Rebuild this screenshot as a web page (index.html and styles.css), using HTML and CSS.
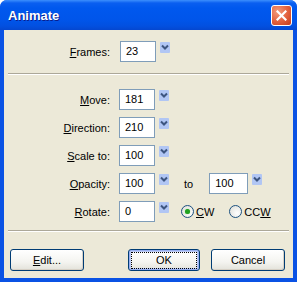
FILE: index.html
```html
<!DOCTYPE html>
<html lang="en">
  <head>
    <meta charset="UTF-8" />
    <title>Animate</title>
    <link rel="stylesheet" href="styles.css">
  </head>
  <body>
    <div class="window">
      <div class="titlebar">
        <span class="title">Animate</span>
        <span class="close">
          <svg width="11" height="11" viewBox="0 0 11 11">
            <path d="M1.5 1.5 L9.5 9.5 M9.5 1.5 L1.5 9.5" stroke="#fff" stroke-width="2.2" stroke-linecap="square" />
          </svg>
        </span>
      </div>

      <div class="content">
        <div class="row first">
          <label class="label"><u>F</u>rames:</label>
          <span class="field">23</span>
          <span class="drop"></span>
        </div>

        <div class="sep"></div>

        <div class="rows">
          <div class="row">
            <label class="label"><u>M</u>ove:</label>
            <span class="field">181</span>
            <span class="drop"></span>
          </div>
          <div class="row">
            <label class="label"><u>D</u>irection:</label>
            <span class="field">210</span>
            <span class="drop"></span>
          </div>
          <div class="row">
            <label class="label"><u>S</u>cale to:</label>
            <span class="field">100</span>
            <span class="drop"></span>
          </div>
          <div class="row">
            <label class="label"><u>O</u>pacity:</label>
            <span class="field">100</span>
            <span class="drop"></span>
            <span class="to">to</span>
            <span class="field wide">100</span>
            <span class="drop"></span>
          </div>
          <div class="row">
            <label class="label"><u>R</u>otate:</label>
            <span class="field">0</span>
            <span class="drop"></span>
            <span class="radio checked"></span>
            <span class="radio-text"><u>C</u>W</span>
            <span class="radio"></span>
            <span class="radio-text">CC<u>W</u></span>
          </div>
        </div>

        <div class="sep bottom"></div>

        <div class="buttons">
          <button class="btn"><u>E</u>dit...</button>
          <button class="btn default"><span class="focus">OK</span></button>
          <button class="btn">Cancel</button>
        </div>
      </div>
    </div>
  </body>
</html>
```

FILE: styles.css
```css
body {
  margin: 0;
  font-family: 'Liberation Sans', Arial, sans-serif;
  font-size: 11px;
  color: #000;
  background: #fff;
}

.window {
  width: 297px;
  height: 282px;
  box-sizing: border-box;
  display: flex;
  flex-direction: column;
  background: #0a52e4;
  border-radius: 7px 7px 0 0;
  overflow: hidden;
}

.titlebar {
  height: 30px;
  flex: none;
  display: flex;
  align-items: center;
  justify-content: space-between;
  padding: 0 5px 0 8px;
  background: linear-gradient(#3c8ffd 0, #0a5ff0 3px, #0058ee 8px, #0055ea 20px, #0250e0 26px, #0447d0 30px);
}

.title {
  color: #fff;
  font-weight: bold;
  font-size: 13px;
  text-shadow: 1px 1px 0 #0a1e8c;
  margin-top: 1px;
}

.close {
  width: 19px;
  height: 19px;
  border: 1px solid #fff;
  border-radius: 3px;
  display: flex;
  align-items: center;
  justify-content: center;
  background: radial-gradient(circle at 30% 30%, #f39c7c, #e2603c 55%, #c53b1b);
  margin-top: 1px;
}

.content {
  flex: 1;
  margin: 0 4px 4px;
  background: #ece9d8;
  padding-top: 11px;
}

.row {
  display: flex;
  align-items: center;
  height: 21px;
}

.rows {
  display: flex;
  flex-direction: column;
  gap: 7px;
  margin-top: 14px;
}

.label {
  width: 110px;
  text-align: right;
  padding-right: 4px;
  box-sizing: border-box;
  flex: none;
}

.field {
  width: 36px;
  height: 21px;
  box-sizing: border-box;
  border: 1px solid #7f9db9;
  background: #fff;
  padding-left: 5px;
  line-height: 19px;
}

.field.wide {
  width: 39px;
}

.row .field {
  margin-left: 5px;
}

.first .field {
  margin-left: 6px;
}

.drop {
  width: 10px;
  height: 11px;
  margin-left: 4px;
  align-self: flex-start;
  margin-top: 1px;
  background: #b1c6f4 url("data:image/svg+xml,%3Csvg xmlns='http://www.w3.org/2000/svg' width='10' height='11'%3E%3Cpath d='M2 3.5 L5 6.5 L8 3.5' fill='none' stroke='%233d5580' stroke-width='2'/%3E%3C/svg%3E") no-repeat;
  border-radius: 1px;
}

.to {
  margin-left: 15px;
  margin-right: 16px;
}

.row .field.wide {
  margin-left: 0;
}

.radio {
  width: 13px;
  height: 13px;
  box-sizing: border-box;
  border: 1px solid #1c5180;
  border-radius: 50%;
  background: radial-gradient(circle at 65% 65%, #fff, #dcdcd5);
  margin-left: 12px;
  margin-right: 2px;
  position: relative;
}

.radio.checked::after {
  content: '';
  position: absolute;
  left: 3px;
  top: 3px;
  width: 5px;
  height: 5px;
  border-radius: 50%;
  background: #21a121;
  box-shadow: 0 0 1px #5fd35f;
}

.radio-text {
  margin-right: 3px;
}

.sep {
  margin: 11px 4px 0;
  height: 1px;
  background: #aca899;
  border-bottom: 1px solid #fff;
}

.sep.bottom {
  margin-top: 8px;
}

.buttons {
  display: flex;
  margin-top: 17px;
  padding-left: 6px;
}

.btn {
  width: 74px;
  height: 22px;
  font: inherit;
  color: #000;
  border: 1px solid #003c74;
  border-radius: 3px;
  background: linear-gradient(#ffffff, #f4f4f0 60%, #e3e2da);
  box-shadow: inset -1px -1px 0 #d6d0c5;
  padding: 0;
}

.btn.default {
  width: 72px;
  margin-left: 44px;
  box-shadow: inset 0 0 0 1px #97aef0, inset 0 0 0 2px #bccbf5;
  display: flex;
  align-items: center;
  justify-content: center;
}

.focus {
  width: 64px;
  height: 15px;
  line-height: 15px;
  outline: 1px dotted #000;
}

.btn:last-child {
  margin-left: 11px;
}
```
